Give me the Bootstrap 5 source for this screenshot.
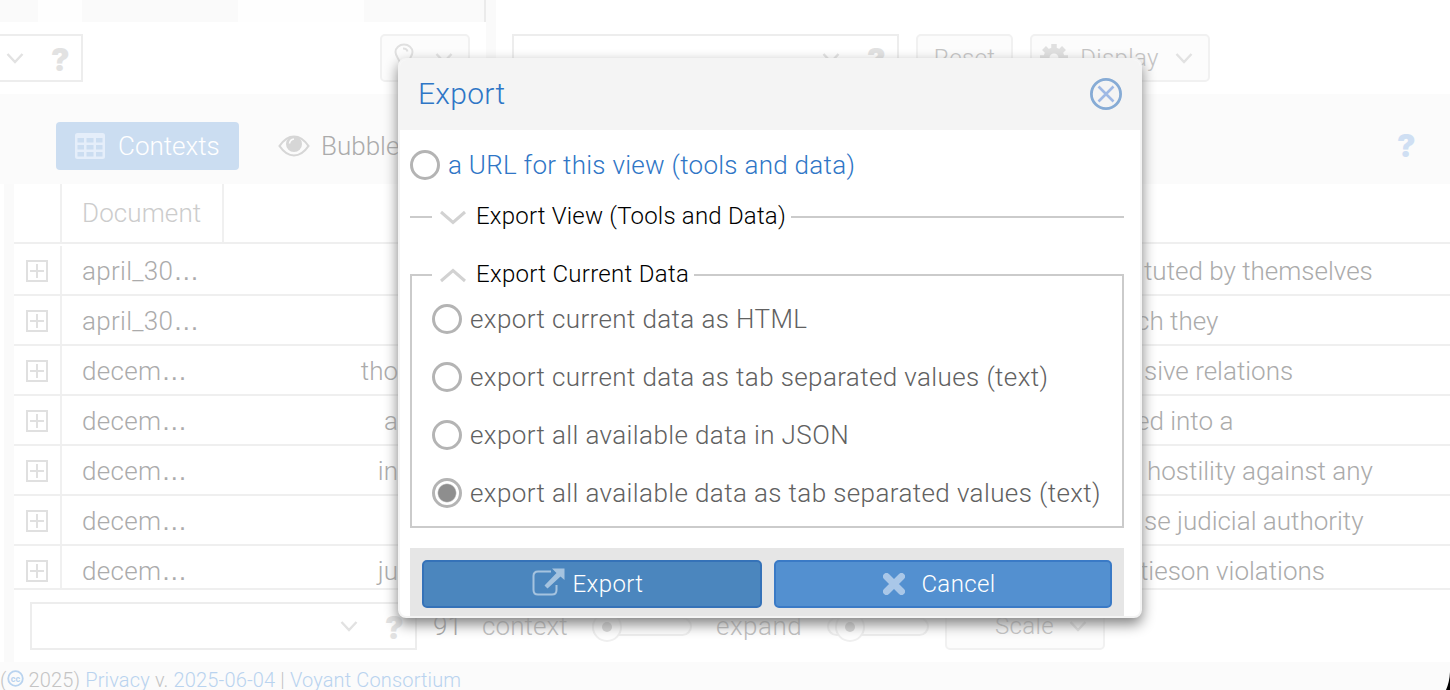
<!DOCTYPE html>
<html lang="en">
<head>
    <meta charset="utf-8">
    <title>Voyant Tools - Export</title>
    <link href="https://cdn.jsdelivr.net/npm/bootstrap@5.3.3/dist/css/bootstrap.min.css" rel="stylesheet">
    <style>
        body {
            font-family: Roboto, "Liberation Sans", sans-serif;
            font-weight: 300;
            font-size: 26px;
            line-height: 32px;
            color: #ababab;
            background-color: #fff;
        }
        svg {
            display: block;
            flex: none;
        }
        .page {
            height: 690px;
        }
        .top-area {
            height: 94px;
        }
        .left-panel {
            width: 486px;
        }
        .strip {
            height: 22px;
            background-color: #fafafa;
            border-right: 2px solid #ebebeb;
        }
        .strip-a { width: 38px; }
        .strip-b { width: 44px; background-color: #fefefe; }
        .strip-c { width: 156px; }
        .strip-d { width: 126px; background-color: #fefefe; }
        .splitter {
            width: 10px;
            background-color: #fafafa;
        }
        .tool-bar {
            padding-top: 12px;
        }
        .right-bar {
            padding: 34px 0 0 16px;
        }
        .combo {
            height: 48px;
            border: 2px solid #ededed;
        }
        .combo-left { width: 83px; padding-left: 6px; padding-right: 12px; }
        .combo-right { width: 387px; padding-right: 12px; }
        .combo-bottom { width: 387px; padding-right: 12px; }
        .combo-chevron { margin-right: 27px; }
        .tool-btn {
            height: 48px;
            border: 2px solid #f1f1f1;
            border-radius: 5px;
            background-color: #fcfcfc;
            font-size: 24px;
            letter-spacing: .35px;
            color: #c4c4c4;
        }
        .bulb-btn { width: 90px; margin-right: 16px; padding: 0 15px 0 12px; }
        .reset-btn { width: 97px; margin: 0 17px; }
        .display-btn { width: 180px; padding: 0 15px 0 8px; }
        .display-text { margin-right: 4px; }
        .help {
            font-family: Inter, sans-serif;
            font-weight: 900;
            font-size: 31px;
            width: 18px;
            margin-top: 3px;
            text-align: center;
            color: #e2e2e2;
        }
        .help-blue { color: #cfdff3; margin-top: 0; margin-right: 35px; }
        .tabs-row {
            height: 90px;
            background-color: #fbfbfb;
            padding: 14px 0 0 56px;
        }
        .tab-active {
            flex: none;
            width: 183px;
            height: 48px;
            padding-left: 19px;
            border-radius: 4px;
            background-color: #cbddf1;
            color: #fff;
        }
        .tab-label { margin-left: 13px; }
        .tab-bubble { margin-left: 39px; }
        .bubble-label { margin-left: 11px; }
        .side-gap { width: 4px; }
        .side-split { width: 10px; background-color: #fafafa; }
        .grid-line {
            display: grid;
            grid-template-columns: 48px 162px 174px 738px 1fr;
            height: 50px;
            border-bottom: 2px solid #efefef;
            white-space: nowrap;
        }
        .grid-line > div {
            display: flex;
            align-items: center;
            padding-top: 2px;
        }
        .grid-line > div:first-child {
            border-right: 2px solid #f0f0f0;
            justify-content: center;
        }
        .grid-line > .doc-name { padding-left: 20px; letter-spacing: .3px; }
        .grid-line > .doc-head { border-right: 2px solid #f0f0f0; padding-top: 0; letter-spacing: .1px; }
        .grid-head {
            height: 60px;
            margin-bottom: 2px;
            color: #cccccc;
        }
        .dots { font-family: "Liberation Sans", sans-serif; letter-spacing: 0; }
        .grid-last { height: 44px; overflow: hidden; }
        .grid-last > div { height: 48px; }
        .left-ctx { justify-content: flex-end; }
        .far { margin-left: 11px; }
        .bottom-bar {
            height: 72px;
            padding-left: 16px;
            color: #bfbfbf;
        }
        .count { width: 31px; margin-left: 16px; color: #a6a6a6; }
        .context-label { width: 87px; margin-left: 18px; letter-spacing: .1px; }
        .expand-label { width: 88px; margin-left: 24px; letter-spacing: .5px; }
        .slider { margin: 2px 0 0 23px; }
        .scale-btn { width: 160px; padding: 0 16px 0 48px; margin-left: 16px; }
        .page-foot {
            height: 28px;
            padding-top: 2px;
            background-color: #fbfbfb;
            font-size: 20px;
            line-height: 32px;
            letter-spacing: .15px;
            color: #c4c4c4;
            white-space: pre;
        }
        .page-foot a { color: #b9d3ef; text-decoration: none; }
        .page-foot svg { margin-top: 6px; }
        .corner {
            position: absolute;
            right: 0;
            bottom: 0;
        }
        .export-box {
            position: absolute;
            left: 398px;
            top: 58px;
            width: 744px;
            height: 560px;
            border: 2px solid #f4f4f4;
            border-radius: 8px;
            background-color: #fff;
            box-shadow: 0 6px 14px #808080;
            overflow: hidden;
            color: #616161;
        }
        .export-head {
            height: 70px;
            padding: 0 18px 2px;
            background-color: #f4f4f4;
            color: #2f76c6;
            font-size: 30px;
            letter-spacing: .3px;
        }
        .export-body {
            width: 734px;
            padding: 19px 10px 0;
        }
        .radio-dot {
            width: 30px;
            height: 30px;
            flex: none;
            margin-right: 8px;
            border: 3px solid #b4b4b4;
            border-radius: 50%;
        }
        .radio-on {
            background: radial-gradient(circle, #8e8e8e 0 8.4px, #fff 9.8px);
        }
        .choice { height: 32px; letter-spacing: .39px; white-space: nowrap; }
        .choice-url { color: #2f76c6; letter-spacing: .28px; }
        .legend-line {
            height: 30px;
            margin-top: 20px;
            color: #000;
            font-size: 24px;
            letter-spacing: .2px;
        }
        .legend-line::before {
            content: "";
            width: 22px;
            border-top: 2px solid #cbcbcb;
            margin: 2px 8px 0 0;
        }
        .legend-line::after {
            content: "";
            flex: 1;
            border-top: 2px solid #cbcbcb;
            margin: 2px 0 0 5px;
        }
        .legend-line svg { margin: 3px 10px 0 0; }
        .legend-data { margin-top: 28px; letter-spacing: .3px; }
        .data-set {
            height: 253px;
            margin-top: -14px;
            padding: 28px 20px 0;
            border: 2px solid #cbcbcb;
            border-top: 0;
        }
        .data-set .choice { margin-bottom: 26px; }
        .export-foot {
            height: 68px;
            margin-top: 20px;
            padding: 12px;
            background-color: #e6e6e6;
        }
        .big-btn {
            height: 48px;
            border: 2px solid #3a7ac6;
            border-radius: 5px;
            background-color: #5390d0;
            color: #fff;
            font-size: 24px;
            letter-spacing: .4px;
        }
        .go-btn { width: 340px; padding-right: 9px; border-color: #3572b8; background-color: #4b86be; }
        .cancel-btn { width: 338px; padding-right: 7px; }
    </style>
</head>
<body>

<svg width="0" height="0" class="position-absolute">
    <symbol id="chevron" viewBox="0 0 18 12"><path d="M1.5 2 9 10 16.5 2" fill="none" stroke="currentColor" stroke-width="2.4"/></symbol>
    <symbol id="plus-box" viewBox="0 0 22 22"><path d="M1 1H21V21H1zM11 4V18M4 11H18" fill="none" stroke="#e0e0e0" stroke-width="2"/></symbol>
</svg>

<div class="page d-flex flex-column overflow-hidden position-relative">
    <div class="top-area d-flex">
        <div class="left-panel">
            <div class="strip d-flex">
                <div class="strip-a"></div>
                <div class="strip-b"></div>
                <div class="strip-c"></div>
                <div class="strip-d"></div>
            </div>
            <div class="tool-bar d-flex justify-content-between">
                <div class="combo combo-left border-start-0 d-flex align-items-center justify-content-between">
                    <svg width="18" height="12" color="#e2e2e2"><use href="#chevron"/></svg>
                    <span class="help">?</span>
                </div>
                <div class="tool-btn bulb-btn d-flex align-items-center justify-content-between">
                    <svg width="20" height="30" viewBox="0 0 20 30" fill="none" stroke="#e0e0e0" stroke-width="2"><path d="M6 21C6 16 1.500 14 1.500 9A8.500 7.500 0 0 1 18.500 9C18.500 14 14 16 14 21zM9 5.500Q13 5.500 13.500 8.500M7 25H13"/></svg>
                    <svg width="18" height="12" color="#e2e2e2"><use href="#chevron"/></svg>
                </div>
            </div>
        </div>
        <div class="splitter"></div>
        <div class="right-bar d-flex">
            <div class="combo combo-right d-flex align-items-center justify-content-end">
                <svg class="combo-chevron" width="18" height="12" color="#e2e2e2"><use href="#chevron"/></svg>
                <span class="help">?</span>
            </div>
            <div class="tool-btn reset-btn d-flex align-items-center justify-content-center">Reset</div>
            <div class="tool-btn display-btn d-flex align-items-center justify-content-between">
                <svg width="28" height="28" viewBox="0 0 28 28"><circle cx="14" cy="14" r="7.500" fill="none" stroke="#e0e0e0" stroke-width="6"/><path d="M14 0V6M14 22V28M0 14H6M22 14H28M4 4 8 8M20 20 24 24M4 24 8 20M20 8 24 4" stroke="#e0e0e0" stroke-width="5.500"/></svg>
                <span class="display-text">Display</span>
                <svg width="18" height="12" color="#e2e2e2"><use href="#chevron"/></svg>
            </div>
        </div>
    </div>

    <div class="tabs-row d-flex align-items-center">
        <div class="tab-active d-flex align-items-center">
            <svg width="30" height="26" viewBox="0 0 30 26"><path fill="#e5eefa" fill-rule="evenodd" d="M2.500 0H27.500Q30 0 30 2.500V23.500Q30 26 27.500 26H2.500Q0 26 0 23.500V2.500Q0 0 2.500 0zM2.500 5V9.500H9V5zM11.500 5V9.500H18.500V5zM21 5V9.500H27.500V5zM2.500 12V16.500H9V12zM11.500 12V16.500H18.500V12zM21 12V16.500H27.500V12zM2.500 19V23.500H9V19zM11.500 19V23.500H18.500V19zM21 19V23.500H27.500V19z"/></svg>
            <span class="tab-label">Contexts</span>
        </div>
        <div class="tab-bubble d-flex align-items-center">
            <svg width="32" height="22" viewBox="0 0 32 22"><path d="M1.500 11Q8 1.500 16 1.500T30.500 11Q24 20.500 16 20.500T1.500 11z" fill="none" stroke="#d6d6d6" stroke-width="2.200"/><circle cx="16" cy="9" r="8" fill="#d6d6d6"/><path d="M11.500 8.500Q12 4.500 16 4" fill="none" stroke="#fbfbfb" stroke-width="1.600"/></svg>
            <span class="bubble-label">Bubble</span>
        </div>
        <span class="help help-blue ms-auto">?</span>
    </div>

    <div class="d-flex flex-fill">
        <div class="side-gap"></div>
        <div class="side-split"></div>
        <div class="flex-fill">
            <div class="grid-line grid-head">
                <div></div>
                <div class="doc-name doc-head">Document</div>
            </div>
            <div class="grid-line">
                <div><svg width="22" height="22"><use href="#plus-box"/></svg></div>
                <div class="doc-name">april_30<span class="dots">…</span></div>
                <div></div><div></div>
                <div><span class="ms-2">tuted by themselves</span></div>
            </div>
            <div class="grid-line">
                <div><svg width="22" height="22"><use href="#plus-box"/></svg></div>
                <div class="doc-name">april_30<span class="dots">…</span></div>
                <div></div><div></div>
                <div><span>ch they</span></div>
            </div>
            <div class="grid-line">
                <div><svg width="22" height="22"><use href="#plus-box"/></svg></div>
                <div class="doc-name">decem<span class="dots">…</span></div>
                <div class="left-ctx">tho</div><div></div>
                <div><span class="ms-2">sive relations</span></div>
            </div>
            <div class="grid-line">
                <div><svg width="22" height="22"><use href="#plus-box"/></svg></div>
                <div class="doc-name">decem<span class="dots">…</span></div>
                <div class="left-ctx">a</div><div></div>
                <div><span>ed into a</span></div>
            </div>
            <div class="grid-line">
                <div><svg width="22" height="22"><use href="#plus-box"/></svg></div>
                <div class="doc-name">decem<span class="dots">…</span></div>
                <div class="left-ctx">in</div><div></div>
                <div><span class="far">hostility against any</span></div>
            </div>
            <div class="grid-line">
                <div><svg width="22" height="22"><use href="#plus-box"/></svg></div>
                <div class="doc-name">decem<span class="dots">…</span></div>
                <div></div><div></div>
                <div><span class="ms-2">se judicial authority</span></div>
            </div>
            <div class="grid-line grid-last">
                <div><svg width="22" height="22"><use href="#plus-box"/></svg></div>
                <div class="doc-name">decem<span class="dots">…</span></div>
                <div class="left-ctx">ju</div><div></div>
                <div><span class="ms-1">tieson violations</span></div>
            </div>
            <div class="bottom-bar d-flex align-items-center">
                <div class="combo combo-bottom d-flex align-items-center justify-content-end">
                    <svg class="combo-chevron" width="18" height="12" color="#e2e2e2"><use href="#chevron"/></svg>
                    <span class="help">?</span>
                </div>
                <span class="count">91</span>
                <span class="context-label">context</span>
                <svg class="slider" width="100" height="32" viewBox="0 0 100 32" fill="#fefefe" stroke="#efefef" stroke-width="2"><rect x="1" y="7" width="98" height="17" rx="8.500"/><circle cx="15" cy="16" r="14"/><circle cx="15" cy="16" r="5" fill="#d6d6d6" stroke="none"/></svg>
                <span class="expand-label">expand</span>
                <svg class="slider" width="102" height="32" viewBox="0 0 102 32" fill="#fefefe" stroke="#efefef" stroke-width="2"><rect x="1" y="7" width="100" height="17" rx="8.500"/><circle cx="23" cy="16" r="14"/><circle cx="23" cy="16" r="5" fill="#d6d6d6" stroke="none"/></svg>
                <div class="tool-btn scale-btn d-flex align-items-center justify-content-between">
                    <span>Scale</span>
                    <svg width="18" height="12" color="#e2e2e2"><use href="#chevron"/></svg>
                </div>
            </div>
        </div>
    </div>

    <div class="page-foot d-flex">(<svg width="17" height="17" viewBox="0 0 17 17"><circle cx="8.500" cy="8.500" r="7.300" fill="none" stroke="#b9d3ef" stroke-width="1.800"/><text x="8.500" y="11.500" text-anchor="middle" font-size="9" font-weight="700" fill="#b9d3ef">cc</text></svg> 2025) <a href="#">Privacy</a> v. <a href="#">2025-06-04</a> | <a href="#">Voyant Consortium</a></div>

    <svg class="corner" width="4" height="18" viewBox="0 0 4 18"><path d="M4 0V18H0Q3.500 10 4 0z"/></svg>

    <div class="export-box">
        <div class="export-head d-flex align-items-center justify-content-between">
            <span>Export</span>
            <svg width="32" height="32" viewBox="0 0 32 32" fill="none"><circle cx="16" cy="16" r="14.600" stroke="#86abd5" stroke-width="2.800"/><path d="M8.500 8.500 23.500 23.500M23.500 8.500 8.500 23.500" stroke="#9fb9e5" stroke-width="2.600"/></svg>
        </div>
        <div class="export-body">
            <div class="choice choice-url d-flex align-items-center"><span class="radio-dot"></span>a URL for this view (tools and data)</div>
            <div class="legend-line d-flex align-items-center">
                <svg width="26" height="15" viewBox="0 0 26 15"><path d="M1 2 13 12.500 25 2" fill="none" stroke="#d2d2d2" stroke-width="3"/></svg>
                <span>Export View (Tools and Data)</span>
            </div>
            <div class="legend-line legend-data d-flex align-items-center">
                <svg width="26" height="15" viewBox="0 0 26 15"><path d="M1 13 13 2.500 25 13" fill="none" stroke="#d2d2d2" stroke-width="3"/></svg>
                <span>Export Current Data</span>
            </div>
            <div class="data-set">
                <div class="choice d-flex align-items-center"><span class="radio-dot"></span>export current data as HTML</div>
                <div class="choice d-flex align-items-center"><span class="radio-dot"></span>export current data as tab separated values (text)</div>
                <div class="choice d-flex align-items-center"><span class="radio-dot"></span>export all available data in JSON</div>
                <div class="choice d-flex align-items-center"><span class="radio-dot radio-on"></span>export all available data as tab separated values (text)</div>
            </div>
            <div class="export-foot d-flex justify-content-between">
                <div class="big-btn go-btn d-flex align-items-center justify-content-center">
                    <svg class="me-2 mb-1" width="33" height="28" viewBox="0 0 33 28"><path d="M19 3.500H6Q1.500 3.500 1.500 8V22Q1.500 26.500 6 26.500H20Q24.500 26.500 24.500 22V17" fill="none" stroke="#a5c3df" stroke-width="2"/><path d="M20 0.500H32.500V12L28.500 8.500 15.500 20.500 12.500 17.500 24.500 5z" fill="#a5c3df"/></svg>
                    <span>Export</span>
                </div>
                <div class="big-btn cancel-btn d-flex align-items-center justify-content-center">
                    <svg class="me-3" width="22" height="22" viewBox="0 0 22 22"><path d="M3.500 3.500 18.500 18.500M18.500 3.500 3.500 18.500" stroke="#a9c7e8" stroke-width="7" stroke-linecap="round"/></svg>
                    <span>Cancel</span>
                </div>
            </div>
        </div>
    </div>
</div>

<script src="https://cdn.jsdelivr.net/npm/bootstrap@5.3.3/dist/js/bootstrap.bundle.min.js"></script>
</body>
</html>
